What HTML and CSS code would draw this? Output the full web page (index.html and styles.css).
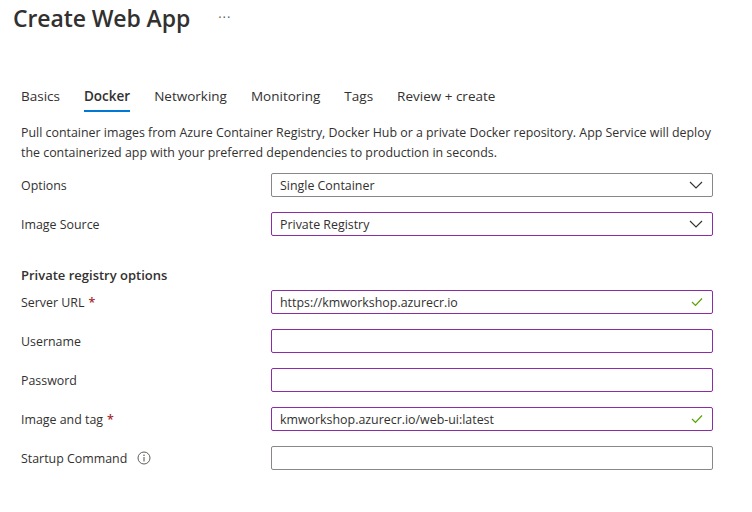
FILE: index.html
```html
<!DOCTYPE html>
<html>
<head>
<meta charset="utf-8">
<link rel="stylesheet" href="styles.css">
</head>
<body>
<div class="page">
  <header class="header">
    <h1 class="title">Create Web App</h1>
    <span class="more">···</span>
  </header>
  <nav class="tabs">
    <span class="tab">Basics</span>
    <span class="tab active">Docker</span>
    <span class="tab">Networking</span>
    <span class="tab">Monitoring</span>
    <span class="tab">Tags</span>
    <span class="tab">Review + create</span>
  </nav>
  <p class="desc">Pull container images from Azure Container Registry, Docker Hub or a private Docker repository. App Service will deploy<br>the containerized app with your preferred dependencies to production in seconds.</p>
  <div class="form">
    <div class="row">
      <label class="label">Options</label>
      <div class="field gray">
        <span class="value">Single Container</span>
        <svg class="chev" width="14" height="8" viewBox="0 0 14 8"><path d="M1 1 L7 7 L13 1" fill="none" stroke="#323130" stroke-width="1.1"/></svg>
      </div>
    </div>
    <div class="row">
      <label class="label">Image Source</label>
      <div class="field purple">
        <span class="value">Private Registry</span>
        <svg class="chev" width="14" height="8" viewBox="0 0 14 8"><path d="M1 1 L7 7 L13 1" fill="none" stroke="#323130" stroke-width="1.1"/></svg>
      </div>
    </div>
    <h2 class="section">Private registry options</h2>
    <div class="row first">
      <label class="label">Server URL <span class="req">*</span></label>
      <div class="field purple">
        <span class="value">https://kmworkshop.azurecr.io</span>
        <svg class="check" width="12" height="10" viewBox="0 0 12 10"><path d="M1 5 L4.5 8.5 L11 1.5" fill="none" stroke="#57a300" stroke-width="1.2"/></svg>
      </div>
    </div>
    <div class="row">
      <label class="label">Username</label>
      <div class="field purple"></div>
    </div>
    <div class="row">
      <label class="label">Password</label>
      <div class="field purple"></div>
    </div>
    <div class="row">
      <label class="label">Image and tag <span class="req">*</span></label>
      <div class="field purple">
        <span class="value">kmworkshop.azurecr.io/web-ui:latest</span>
        <svg class="check" width="12" height="10" viewBox="0 0 12 10"><path d="M1 5 L4.5 8.5 L11 1.5" fill="none" stroke="#57a300" stroke-width="1.2"/></svg>
      </div>
    </div>
    <div class="row">
      <label class="label">Startup Command
        <svg class="info" width="14" height="14" viewBox="0 0 14 14"><circle cx="7" cy="7" r="6" fill="none" stroke="#605e5c" stroke-width="1"/><circle cx="7" cy="4.2" r="0.8" fill="#605e5c"/><path d="M7 6 V10.5" stroke="#605e5c" stroke-width="1.1"/></svg>
      </label>
      <div class="field gray"></div>
    </div>
  </div>
</div>
</body>
</html>
```

FILE: styles.css
```css
html, body {
  margin: 0;
  padding: 0;
  background: #ffffff;
}
body {
  font-family: "Open Sans", "Noto Sans", sans-serif;
  color: #323130;
  font-size: 13px;
}
.page {
  padding: 0 0 0 21px;
}
.header {
  display: flex;
  align-items: center;
  height: 36px;
  margin-left: -8px;
}
.title {
  margin: 0;
  font-size: 23px;
  font-weight: 600;
  letter-spacing: -0.1px;
  line-height: 32px;
}
.more {
  margin-left: 28px;
  font-size: 13px;
  color: #605e5c;
  letter-spacing: 1px;
  margin-top: -2px;
}
.tabs {
  display: flex;
  gap: 24px;
  margin-top: 46px;
  height: 30px;
}
.tab {
  font-size: 13.5px;
  line-height: 28px;
  height: 30px;
  box-sizing: border-box;
  color: #323130;
}
.tab.active {
  font-weight: 600;
  border-bottom: 2px solid #0078d4;
}
.desc {
  margin: 11px 0 0;
  font-size: 12.4px;
  line-height: 20px;
  white-space: nowrap;
}
.form {
  display: flex;
  flex-direction: column;
  gap: 15px;
  margin-top: 10px;
  width: 692px;
}
.row {
  display: grid;
  grid-template-columns: 250px 442px;
  align-items: center;
  height: 24px;
}
.label {
  font-size: 12.4px;
  display: flex;
  align-items: center;
  gap: 4px;
}
.req {
  color: #a4262c;
  font-weight: 600;
}
.info {
  margin-left: 6px;
}
.field {
  box-sizing: border-box;
  height: 24px;
  border: 1px solid #8a8886;
  border-radius: 2px;
  display: flex;
  align-items: center;
  padding: 0 8px 0 8px;
}
.field.purple {
  border-color: #8a2da5;
}
.value {
  flex: 1;
  font-size: 12.4px;
}
.chev {
  margin-right: 1px;
}
.check {
  margin-right: 1px;
}
.section {
  margin: 14px 0 -10px;
  font-size: 13px;
  font-weight: 600;
  line-height: 20px;
}
```
